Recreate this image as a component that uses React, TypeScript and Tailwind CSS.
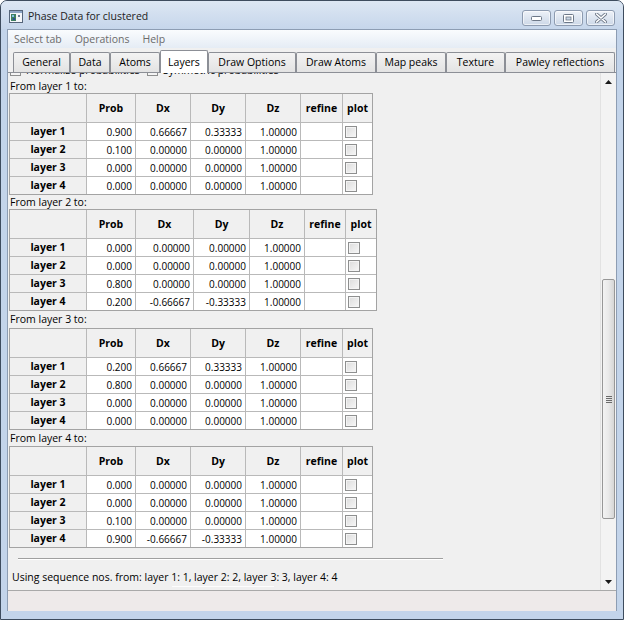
import React from "react";

type Row = [string, string, string, string];

const T1: Row[] = [
  ["0.900", "0.66667", "0.33333", "1.00000"],
  ["0.100", "0.00000", "0.00000", "1.00000"],
  ["0.000", "0.00000", "0.00000", "1.00000"],
  ["0.000", "0.00000", "0.00000", "1.00000"],
];
const T2: Row[] = [
  ["0.000", "0.00000", "0.00000", "1.00000"],
  ["0.000", "0.00000", "0.00000", "1.00000"],
  ["0.800", "0.00000", "0.00000", "1.00000"],
  ["0.200", "-0.66667", "-0.33333", "1.00000"],
];
const T3: Row[] = [
  ["0.200", "0.66667", "0.33333", "1.00000"],
  ["0.800", "0.00000", "0.00000", "1.00000"],
  ["0.000", "0.00000", "0.00000", "1.00000"],
  ["0.000", "0.00000", "0.00000", "1.00000"],
];
const T4: Row[] = [
  ["0.000", "0.00000", "0.00000", "1.00000"],
  ["0.000", "0.00000", "0.00000", "1.00000"],
  ["0.100", "0.00000", "0.00000", "1.00000"],
  ["0.900", "-0.66667", "-0.33333", "1.00000"],
];

function Check() {
  return (
    <div className="w-[12px] h-[12px] border border-[#8e8f8f] bg-gradient-to-br from-[#dcdcdc] to-[#f7f7f7] shadow-[inset_0_0_0_1px_#f4f4f4]" />
  );
}

function LayerTable({ rows, cols }: { rows: Row[]; cols: string }) {
  const headers = ["Prob", "Dx", "Dy", "Dz", "refine", "plot"];
  return (
    <div className={`ml-px grid ${cols} gap-px bg-[#b9b9b9] border border-[#a3a3a3] w-fit`}>
      <div className="h-[28px] bg-[#f0f0f0]" />
      {headers.map((h) => (
        <div key={h} className="h-[28px] bg-[#f0f0f0] flex items-center justify-center font-bold">
          {h}
        </div>
      ))}
      {rows.map((r, i) => (
        <React.Fragment key={i}>
          <div className="h-[17px] bg-[#f0f0f0] flex items-center justify-center font-bold">
            layer {i + 1}
          </div>
          {r.map((v, j) => (
            <div key={j} className="h-[17px] bg-white flex items-center justify-end pr-[3px] text-[10px]">
              {v}
            </div>
          ))}
          <div className="h-[17px] bg-white" />
          <div className="h-[17px] bg-white flex items-center pl-[2px]">
            <Check />
          </div>
        </React.Fragment>
      ))}
    </div>
  );
}

function CapButton({ kind }: { kind: "min" | "max" | "close" }) {
  return (
    <div className="w-[29px] h-[16px] rounded-[3px] border border-[#8d9bb0] bg-gradient-to-b from-[#eef2f8] via-[#dde5f0] to-[#cdd8e7] shadow-[inset_0_0_0_1px_rgba(255,255,255,0.6)] flex items-center justify-center">
      {kind === "min" && (
        <svg width="11" height="5" viewBox="0 0 11 5">
          <rect x="0.5" y="0.5" width="10" height="4" rx="1" fill="#fff" stroke="#6d7888" />
        </svg>
      )}
      {kind === "max" && (
        <svg width="11" height="9" viewBox="0 0 11 9">
          <rect x="0.5" y="0.5" width="10" height="8" rx="1" fill="#fff" stroke="#6d7888" />
          <rect x="3" y="3" width="5" height="3" fill="#c9d5e4" stroke="#6d7888" strokeWidth="0.8" />
        </svg>
      )}
      {kind === "close" && (
        <svg width="12" height="10" viewBox="0 0 12 10">
          <path d="M1.5 1 L10.5 9 M10.5 1 L1.5 9" stroke="#6d7888" strokeWidth="3.2" strokeLinecap="round" />
          <path d="M1.5 1 L10.5 9 M10.5 1 L1.5 9" stroke="#fff" strokeWidth="1.6" strokeLinecap="round" />
        </svg>
      )}
    </div>
  );
}

function AppIcon() {
  return (
    <svg width="14" height="13" viewBox="0 0 14 13">
      <rect x="0.5" y="0.5" width="13" height="12" fill="#f5f7fa" stroke="#55657a" />
      <rect x="1" y="1" width="12" height="2" fill="#8ea6c6" />
      <rect x="2" y="4" width="5" height="7" fill="#3f7f62" />
      <rect x="3" y="5" width="2" height="2" fill="#7fc1e6" />
      <rect x="4" y="8" width="2" height="2" fill="#2a4f9a" />
      <rect x="9" y="5" width="2" height="2" fill="#6b7d94" />
    </svg>
  );
}

const tabs = [
  { t: "General", w: "w-[57px]" },
  { t: "Data", w: "w-[40px]" },
  { t: "Atoms", w: "w-[50px]" },
  { t: "Layers", w: "w-[48px]", sel: true },
  { t: "Draw Options", w: "w-[88px]" },
  { t: "Draw Atoms", w: "w-[80px]" },
  { t: "Map peaks", w: "w-[70px]" },
  { t: "Texture", w: "w-[59px]" },
  { t: "Pawley reflections", w: "w-[110px]" },
];

export default function App() {
  return (
    <div className="w-[624px] h-[620px] flex flex-col border border-[#3e4c5e] rounded-t-[7px] bg-[#c3d4ea] overflow-hidden font-['Open_Sans',sans-serif] text-[10.5px] text-black leading-none">
      {/* Title bar */}
      <div className="h-[28px] shrink-0 flex items-start bg-gradient-to-b from-[#dde7f3] to-[#c6d6eb]">
        <div className="ml-[8px] mt-[9px]">
          <AppIcon />
        </div>
        <div className="ml-[5px] mt-[10px] text-[10.5px] text-[#222]">Phase Data for clustered</div>
        <div className="ml-auto mr-[8px] mt-[9px] flex gap-[3px]">
          <CapButton kind="min" />
          <CapButton kind="max" />
          <CapButton kind="close" />
        </div>
      </div>

      {/* Client */}
      <div className="flex-1 mx-[6px] flex flex-col border-x border-t border-[#8d9db3] bg-[#f0f0f0] min-h-0">
        {/* Menu */}
        <div className="h-[18px] shrink-0 flex items-center gap-[13px] pl-[6px] bg-gradient-to-b from-[#fafcfe] to-[#e5ecf5] text-[#6b6b6b]">
          <span>Select tab</span>
          <span>Operations</span>
          <span>Help</span>
        </div>
        {/* Tabs */}
        <div className="h-[25px] shrink-0 flex items-end pl-[5px] border-b border-[#8c8f96]">
          {tabs.map((tb) =>
            tb.sel ? (
              <div
                key={tb.t}
                className={`${tb.w} h-[23px] -mb-px bg-white border-x border-t border-[#8c8f96] rounded-t-[2px] flex items-center justify-center`}
              >
                {tb.t}
              </div>
            ) : (
              <div
                key={tb.t}
                className={`${tb.w} h-[20px] bg-gradient-to-b from-[#f3f3f3] to-[#e3e3e3] border-x border-t border-[#8c8f96] rounded-t-[2px] flex items-center justify-center`}
              >
                {tb.t}
              </div>
            )
          )}
        </div>
        {/* Pane */}
        <div className="flex-1 flex min-h-0">
          <div className="flex-1 overflow-hidden relative">
            <div className="h-[17px] -mt-[11px] flex items-center pl-[2px]">
              <div className="w-[11px] h-[11px] border border-[#8e8f8f] bg-[#f4f4f4]" />
              <span className="ml-[5px]">Normalize probabilities</span>
              <div className="ml-[7px] w-[11px] h-[11px] border border-[#8e8f8f] bg-[#f4f4f4]" />
              <span className="ml-[5px]">Symmetric probabilities</span>
            </div>
            <div className="h-[14px] pl-[2px] flex items-center">From layer 1 to:</div>
            <LayerTable rows={T1} cols="grid-cols-[76px_48px_54px_54px_54px_41px_29px]" />
            <div className="h-[14px] pl-[2px] flex items-center">From layer 2 to:</div>
            <LayerTable rows={T2} cols="grid-cols-[76px_48px_57px_55px_54px_40px_30px]" />
            <div className="h-[17px] pl-[2px] flex items-center">From layer 3 to:</div>
            <LayerTable rows={T3} cols="grid-cols-[76px_48px_54px_54px_54px_41px_29px]" />
            <div className="h-[16px] pl-[2px] flex items-center">From layer 4 to:</div>
            <LayerTable rows={T4} cols="grid-cols-[76px_48px_54px_54px_54px_41px_29px]" />
            <div className="ml-[10px] mt-[10px] w-[425px] h-[2px] border-t border-[#9f9f9f] border-b border-b-white" />
            <div className="h-[14px] mt-[10px] pl-[4px] flex items-center">
              Using sequence nos. from: layer 1: 1, layer 2: 2, layer 3: 3, layer 4: 4
            </div>
            <div className="ml-[164px] mt-[2px] w-[102px] h-px bg-[#fdfdfd]" />
          </div>
          {/* Scrollbar */}
          <div className="w-[16px] shrink-0 flex flex-col bg-[#f3f3f3] border-l border-[#e2e2e2]">
            <div className="h-[17px] shrink-0 flex items-center justify-center">
              <svg width="7" height="4" viewBox="0 0 7 4">
                <path d="M0 4 L3.5 0 L7 4 Z" fill="#1a1a1a" />
              </svg>
            </div>
            <div className="h-[189px] shrink-0" />
            <div className="h-[240px] shrink-0 mx-px rounded-[2px] border border-[#979797] bg-gradient-to-r from-[#f3f3f3] via-[#e9e9e9] to-[#d6d6d6] flex items-center justify-center">
              <div className="flex flex-col gap-[1px]">
                <div className="w-[6px] h-px bg-[#6b6b6b]" />
                <div className="w-[6px] h-px bg-[#6b6b6b]" />
                <div className="w-[6px] h-px bg-[#6b6b6b]" />
                <div className="w-[6px] h-px bg-[#6b6b6b]" />
              </div>
            </div>
            <div className="flex-1" />
            <div className="h-[17px] shrink-0 flex items-center justify-center">
              <svg width="7" height="4" viewBox="0 0 7 4">
                <path d="M0 0 L7 0 L3.5 4 Z" fill="#1a1a1a" />
              </svg>
            </div>
          </div>
        </div>
        {/* Status area */}
        <div className="h-[21px] shrink-0 border-t border-[#a9a9a9] bg-[#eeeaea]" />
      </div>
      <div className="h-[8px] shrink-0" />
    </div>
  );
}
